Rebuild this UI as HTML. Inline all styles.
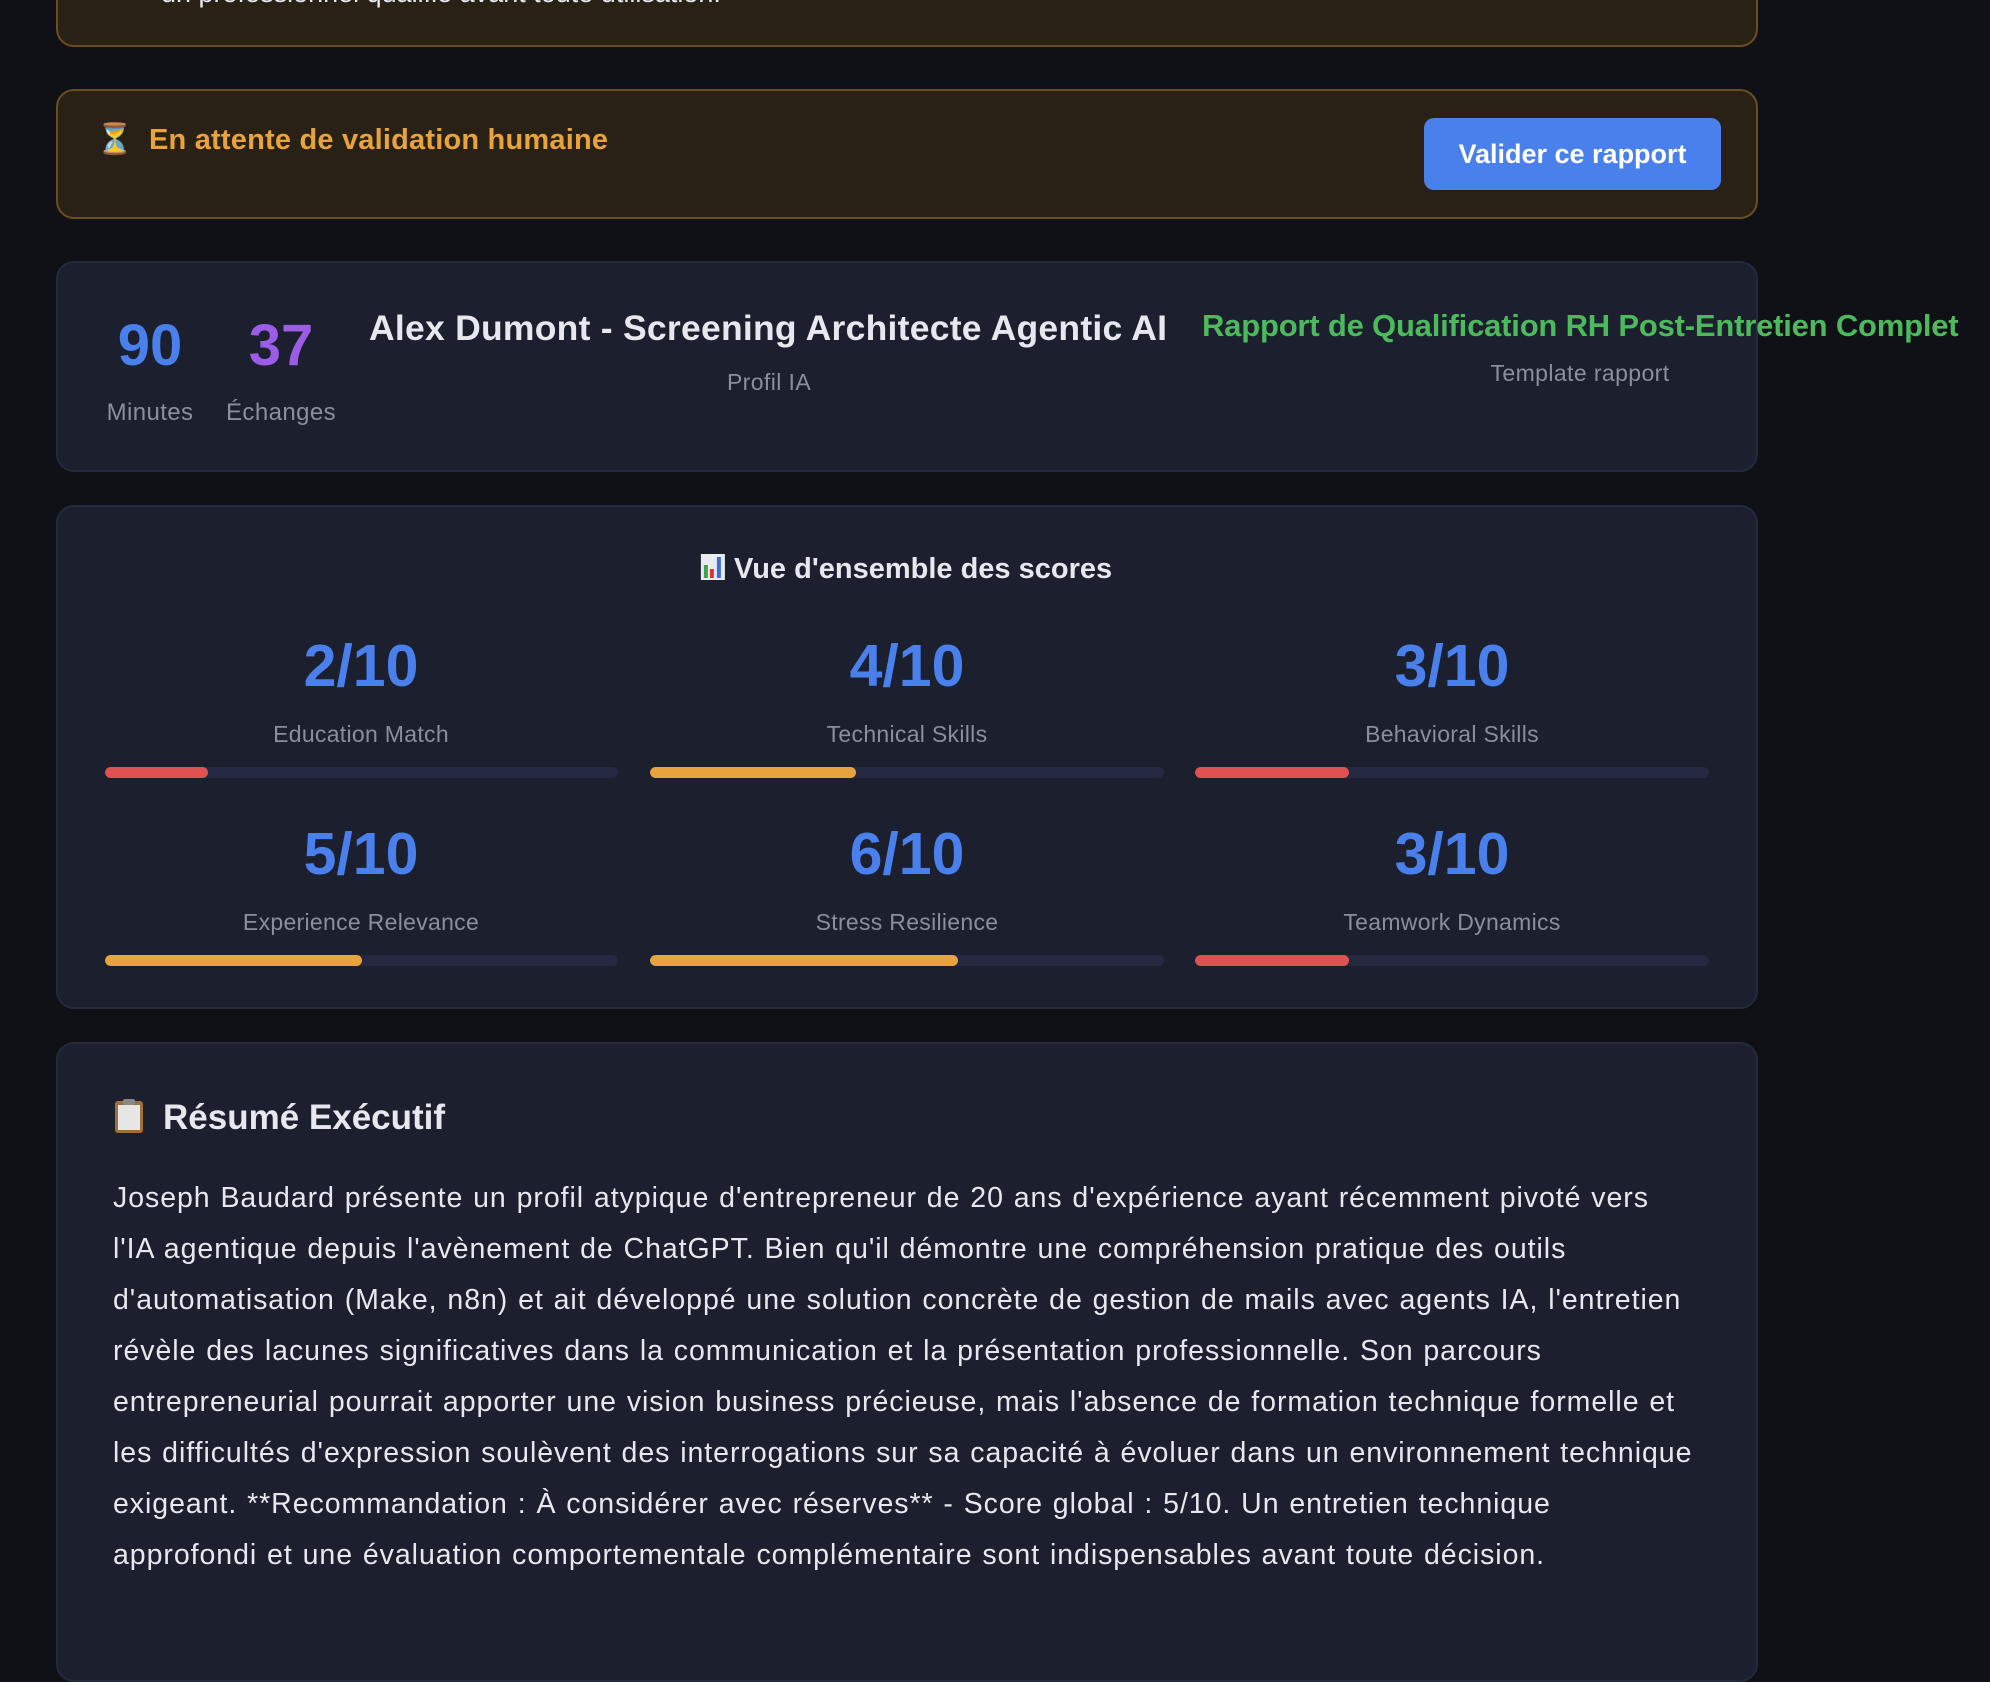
<!DOCTYPE html>
<html><head><meta charset="utf-8">
<style>
*{box-sizing:border-box;margin:0;padding:0}
html,body{width:1990px;height:1626px;overflow:hidden;background:#0f1117;font-family:"Liberation Sans","DejaVu Sans",sans-serif;color:#e6e8ee}
.abs{position:absolute}
.card{position:absolute;left:56px;width:1702px;background:#1b1f2e;border:2px solid #242a3b;border-radius:18px}
.alert{position:absolute;left:56px;width:1702px;background:#2a2116;border:2px solid #6b4e1c;border-radius:18px}
.c{position:absolute;text-align:center;white-space:nowrap;transform:translateX(-50%)}
.big{font-weight:bold;font-size:58px;line-height:56px}
.gray{color:#8a8f9e}
.track{position:absolute;height:11px;border-radius:6px;background:#242840;overflow:hidden}
.fill{height:100%;border-radius:6px}
.score{color:#4a80ec;font-weight:bold;font-size:59px;line-height:60px}
.lbl{color:#8a8f9e;font-size:23px;line-height:28px;letter-spacing:0.3px}
.p{position:absolute;left:113px;font-size:28.5px;line-height:51px;white-space:nowrap;color:#e6e8ee;letter-spacing:0.95px;word-spacing:1px}
</style></head><body>

<div class="alert" style="top:-40px;height:87px;"></div>
<div class="abs" style="left:161px;top:-22px;font-size:27px;color:#e6e8ee;white-space:nowrap">un professionnel qualifié avant toute utilisation.</div>

<div class="alert" style="top:89px;height:130px;"></div>
<div class="abs" style="left:96px;top:122px;font-size:30px;color:#c99a5b">⏳</div>
<div class="abs" style="left:149px;top:124px;font-size:29px;font-weight:bold;color:#e8a33d;white-space:nowrap;letter-spacing:0.2px">En attente de validation humaine</div>
<div class="abs" style="left:1424px;top:118px;width:297px;height:72px;background:#4a80ec;border-radius:10px;color:#fff;font-weight:bold;font-size:27px;line-height:72px;text-align:center">Valider ce rapport</div>

<div class="card" style="top:261px;height:211px;"></div>
<div class="c big" style="left:150px;top:318px;color:#4a80ec">90</div>
<div class="c big" style="left:281px;top:318px;color:#9b5de5">37</div>
<div class="c gray" style="left:150px;top:399px;font-size:24px;letter-spacing:0.4px">Minutes</div>
<div class="c gray" style="left:281px;top:399px;font-size:24px;letter-spacing:0.4px">Échanges</div>
<div class="abs" style="left:369px;top:308px;font-size:35.5px;font-weight:bold;white-space:nowrap;letter-spacing:0.25px">Alex Dumont - Screening Architecte Agentic AI</div>
<div class="c gray" style="left:769px;top:369px;font-size:23px;letter-spacing:0.4px">Profil IA</div>
<div class="abs" style="left:1202px;top:308px;font-size:31px;font-weight:bold;color:#4cba5c;white-space:nowrap;letter-spacing:-0.2px">Rapport de Qualification RH Post-Entretien Complet</div>
<div class="c gray" style="left:1580px;top:360px;font-size:23px;letter-spacing:0.4px">Template rapport</div>

<div class="card" style="top:505px;height:504px;"></div>
<div class="c" style="left:906px;top:552px;font-size:29px;font-weight:bold;line-height:34px">
<svg width="26" height="28" viewBox="0 0 26 28" style="vertical-align:-3px"><rect x="1" y="1" width="24" height="26" fill="#e8ecf2"/><rect x="4" y="12" width="4" height="13" fill="#3fa34d"/><rect x="10" y="16" width="4" height="9" fill="#d33"/><rect x="17" y="4" width="4" height="21" fill="#3a6fd8"/></svg> Vue d'ensemble des scores</div>

<div class="c score" style="left:361px;top:636px">2/10</div>
<div class="c score" style="left:907px;top:636px">4/10</div>
<div class="c score" style="left:1452px;top:636px">3/10</div>
<div class="c lbl" style="left:361px;top:720px">Education Match</div>
<div class="c lbl" style="left:907px;top:720px">Technical Skills</div>
<div class="c lbl" style="left:1452px;top:720px">Behavioral Skills</div>
<div class="track" style="left:105px;top:767px;width:513px"><div class="fill" style="width:20%;background:#e05252"></div></div>
<div class="track" style="left:650px;top:767px;width:514px"><div class="fill" style="width:40%;background:#e8a33d"></div></div>
<div class="track" style="left:1195px;top:767px;width:514px"><div class="fill" style="width:30%;background:#e05252"></div></div>

<div class="c score" style="left:361px;top:824px">5/10</div>
<div class="c score" style="left:907px;top:824px">6/10</div>
<div class="c score" style="left:1452px;top:824px">3/10</div>
<div class="c lbl" style="left:361px;top:908px">Experience Relevance</div>
<div class="c lbl" style="left:907px;top:908px">Stress Resilience</div>
<div class="c lbl" style="left:1452px;top:908px">Teamwork Dynamics</div>
<div class="track" style="left:105px;top:955px;width:513px"><div class="fill" style="width:50%;background:#e8a33d"></div></div>
<div class="track" style="left:650px;top:955px;width:514px"><div class="fill" style="width:60%;background:#e8a33d"></div></div>
<div class="track" style="left:1195px;top:955px;width:514px"><div class="fill" style="width:30%;background:#e05252"></div></div>

<div class="card" style="top:1042px;height:640px;"></div>
<div class="abs" style="left:113px;top:1097px;white-space:nowrap;font-size:35px;font-weight:bold;line-height:42px">
<svg width="34" height="36" viewBox="0 0 34 36" style="vertical-align:-5px;margin-right:16px"><rect x="2" y="3" width="28" height="32" rx="3" fill="#a0703a"/><rect x="5" y="7" width="22" height="25" fill="#e6e6e6"/><rect x="10" y="1" width="12" height="6" rx="2" fill="#888"/></svg>Résumé Exécutif</div>
<div class="p" style="top:1173px">Joseph Baudard présente un profil atypique d'entrepreneur de 20 ans d'expérience ayant récemment pivoté vers</div>
<div class="p" style="top:1224px">l'IA agentique depuis l'avènement de ChatGPT. Bien qu'il démontre une compréhension pratique des outils</div>
<div class="p" style="top:1275px">d'automatisation (Make, n8n) et ait développé une solution concrète de gestion de mails avec agents IA, l'entretien</div>
<div class="p" style="top:1326px">révèle des lacunes significatives dans la communication et la présentation professionnelle. Son parcours</div>
<div class="p" style="top:1377px">entrepreneurial pourrait apporter une vision business précieuse, mais l'absence de formation technique formelle et</div>
<div class="p" style="top:1428px">les difficultés d'expression soulèvent des interrogations sur sa capacité à évoluer dans un environnement technique</div>
<div class="p" style="top:1479px">exigeant. **Recommandation : À considérer avec réserves** - Score global : 5/10. Un entretien technique</div>
<div class="p" style="top:1530px">approfondi et une évaluation comportementale complémentaire sont indispensables avant toute décision.</div>
</body></html>
